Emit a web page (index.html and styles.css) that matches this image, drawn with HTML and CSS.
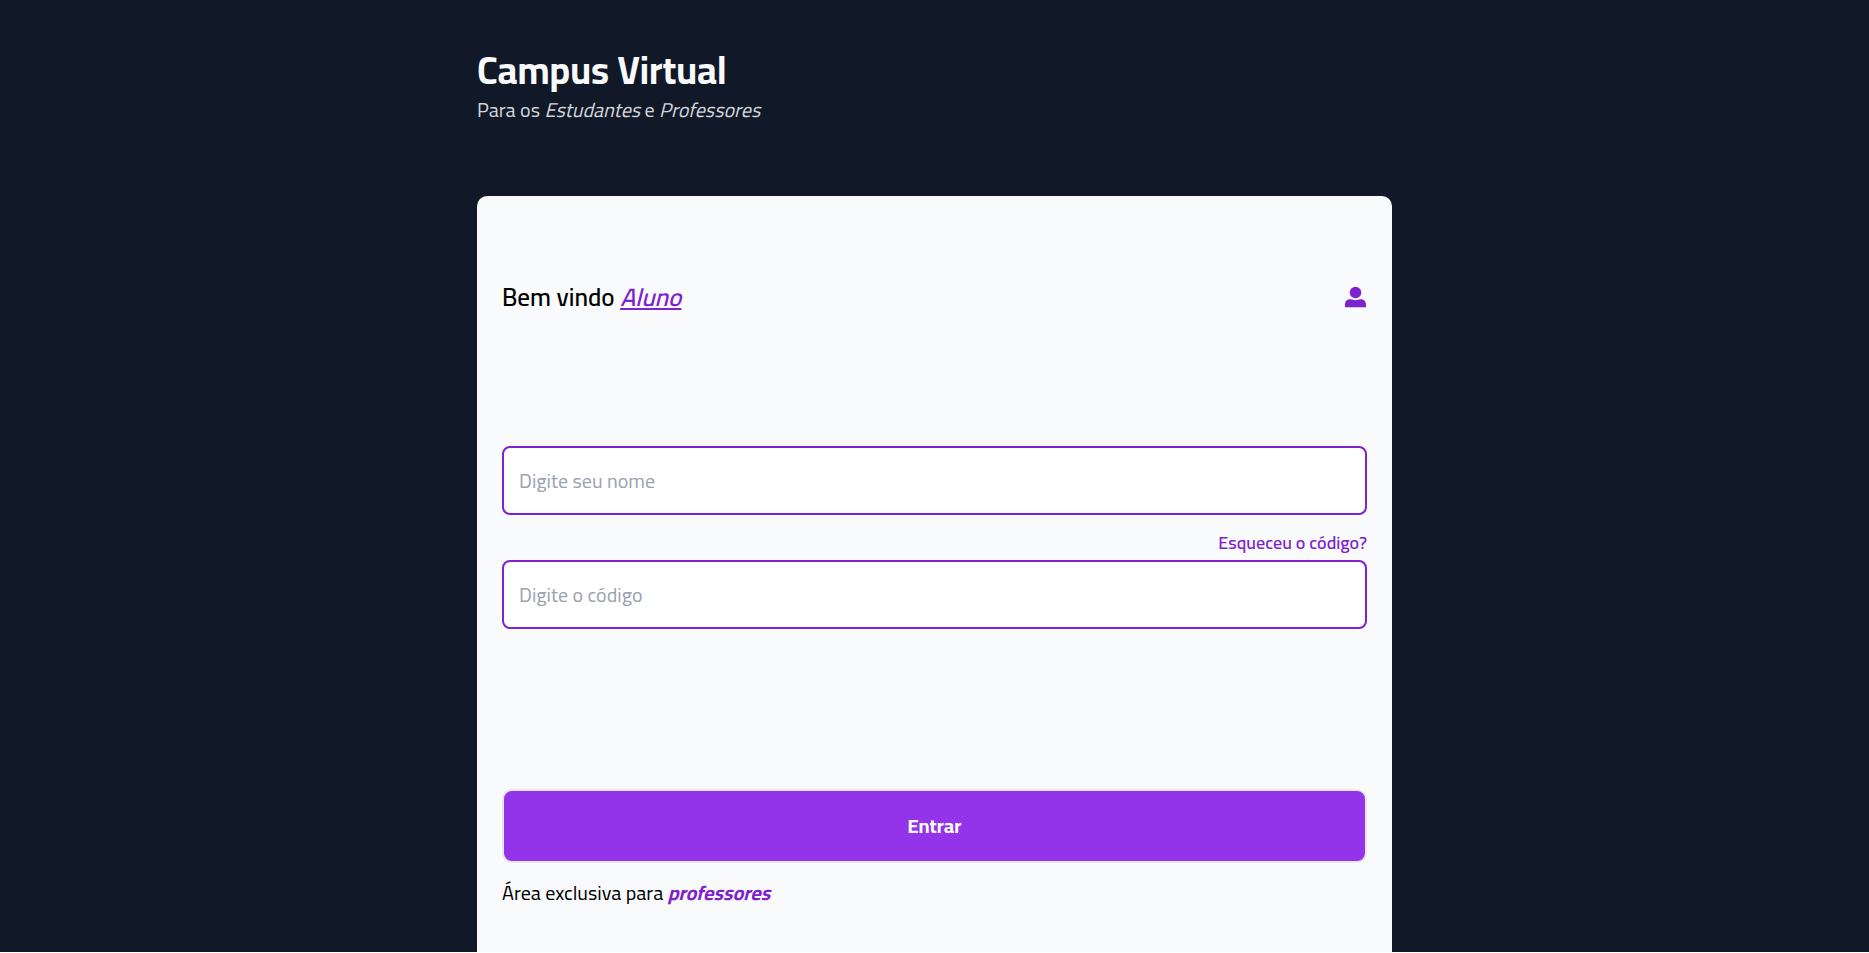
FILE: index.html
```html
<!DOCTYPE html>
<html lang="pt-BR">
<head>
<meta charset="utf-8">
<meta name="viewport" content="width=device-width, initial-scale=1">
<title>Campus Virtual</title>
<link rel="stylesheet" href="styles.css">
</head>
<body>
<div class="page">
  <header class="intro">
    <h1 class="title">Campus Virtual</h1>
    <p class="subtitle">Para os <em>Estudantes</em> e <em>Professores</em></p>
  </header>
  <main class="card">
    <div class="welcome">
      <h2 class="greeting">Bem vindo <em class="role">Aluno</em></h2>
      <svg class="user-icon" viewBox="0 0 22 22" aria-hidden="true"><circle cx="10.5" cy="6.5" r="5.8"/><path d="M0 20.8V19C0 15.2 2.1 13.2 5.5 13.2C7.3 13.2 8.3 14.2 10.5 14.2S13.7 13.2 15.5 13.2C18.9 13.2 21 15.2 21 19V20.8Q21 21.3 20.5 21.3H0.5Q0 21.3 0 20.8Z"/></svg>
    </div>
    <form class="form">
      <div class="fields">
        <input class="field" type="text" aria-label="Nome" placeholder="Digite seu nome">
        <a class="forgot" href="#">Esqueceu o código?</a>
        <input class="field" type="text" aria-label="Código" placeholder="Digite o código">
      </div>
      <button class="submit" type="submit">Entrar</button>
    </form>
    <p class="teachers">Área exclusiva para <a class="teachers-link" href="#">professores</a></p>
  </main>
</div>
</body>
</html>
```
FILE: styles.css
```css
* {
  box-sizing: border-box;
}

body {
  margin: 0;
  background: #fff;
  color: #000;
  font-family: Cairo, "Titillium Web", Roboto, sans-serif;
  font-size: 20px;
  line-height: 28px;
}

h1,
h2,
p {
  margin: 0;
}

.page {
  display: flex;
  flex-direction: column;
  width: 100%;
  min-height: calc(100vh - 1px);
  padding: 48px calc((100% - 915px) / 2) 0;
  background: #111827;
}

.intro {
  display: flex;
  flex-direction: column;
  gap: 4px;
}

.title {
  color: #f9fafb;
  font-size: 38px;
  line-height: 44px;
  font-weight: 700;
}

.subtitle {
  color: #d1d5db;
}

.card {
  flex: 1;
  margin-top: 72px;
  padding: 83px 25px 32px;
  border-radius: 10px 10px 0 0;
  background: #f9fafb;
}

.welcome {
  display: flex;
  align-items: center;
  justify-content: space-between;
}

.greeting {
  font-size: 25px;
  line-height: 36px;
  font-weight: 600;
}

.role {
  color: #7e22ce;
  text-decoration: underline;
  text-decoration-thickness: 2px;
  text-underline-offset: 2px;
}

.user-icon {
  width: 22px;
  height: 22px;
  fill: #7e22ce;
}

.fields {
  display: flex;
  flex-direction: column;
}

.form {
  display: flex;
  flex-direction: column;
  gap: 160px;
  margin-top: 131px;
}

.field {
  width: 100%;
  height: 69px;
  padding: 0 15px;
  border: 2px solid #7e22ce;
  border-radius: 8px;
  background: #fff;
  color: #111827;
  font: inherit;
}

.field::placeholder {
  color: #9ca3af;
}

.forgot {
  align-self: flex-end;
  margin: 14px 0 3px;
  color: #7e22ce;
  font-size: 18px;
  font-weight: 600;
  text-decoration: none;
}

.submit {
  width: 100%;
  height: 74px;
  border: 2px solid #e5e7eb;
  border-radius: 10px;
  background: #9333ea;
  color: #f9fafb;
  font: inherit;
  font-weight: 700;
}

.teachers {
  margin-top: 16px;
}

.teachers-link {
  color: #7e22ce;
  font-style: italic;
  font-weight: 700;
  text-decoration: none;
}
```
